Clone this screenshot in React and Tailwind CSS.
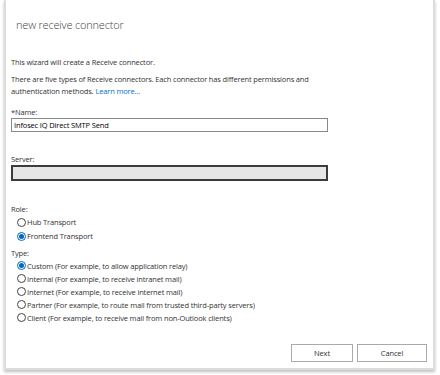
import React, { useState } from 'react';

const Radio = ({ checked, label, onClick, h }) => (
  <div onClick={onClick} className={`flex items-center cursor-default ${h}`}>
    <span
      className={`w-[9px] h-[9px] rounded-full border flex items-center justify-center bg-white ${
        checked ? 'border-[#0067c0]' : 'border-[#444]'
      }`}
    >
      {checked && <span className="w-[5px] h-[5px] rounded-full bg-[#0067c0]" />}
    </span>
    <span className="ml-[1px]">{label}</span>
  </div>
);

const App = () => {
  const [role, setRole] = useState('frontend');
  const [type, setType] = useState('custom');

  const types = [
    ['custom', 'Custom (For example, to allow application relay)'],
    ['internal', 'Internal (For example, to receive intranet mail)'],
    ['internet', 'Internet (For example, to receive internet mail)'],
    ['partner', 'Partner (For example, to route mail from trusted third-party servers)'],
    ['client', 'Client (For example, to receive mail from non-Outlook clients)'],
  ];

  return (
    <div className="w-[440px] h-[375px] bg-white" style={{ fontFamily: '"Open Sans", "Noto Sans", sans-serif' }}>
      {/* Dialog */}
      <div className="ml-[4px] w-[431px] h-[370px] border-l-2 border-r-2 border-b-2 border-[#dcdcdc] shadow-[0_2px_3px_rgba(0,0,0,0.25)] flex flex-col text-[7.5px] tracking-[-0.15px] text-[#333] leading-[12px]">
        <h1 className="pt-[18px] pl-[10px] text-[11px] font-light tracking-[-0.2px] text-[#444] leading-[14px]">
          new receive connector
        </h1>

        <div className="pl-[5px] pt-[24px] flex-1 flex flex-col">
          <p>This wizard will create a Receive connector.</p>
          <p className="mt-[5px] w-[315px]">
            There are five types of Receive connectors. Each connector has different permissions and authentication
            methods.<span className="ml-[2px] text-[#0072c6]">Learn more...</span>
          </p>

          <label className="mt-[9px]">*Name:</label>
          <input
            defaultValue="Infosec IQ Direct SMTP Send"
            className="w-[317px] h-[14px] border border-[#8a8a8a] px-[2px] text-[7.5px] text-black outline-none"
          />

          <label className="mt-[21px]">Server:</label>
          <div className="w-[317px] h-[16px] border-2 border-[#3c3c3c] bg-[#e6e6e6]" />

          <label className="mt-[22px]">Role:</label>
          <div className="pl-[6px] flex flex-col">
            <Radio h="h-[14px]" checked={role === 'hub'} label="Hub Transport" onClick={() => setRole('hub')} />
            <Radio h="h-[14px]" checked={role === 'frontend'} label="Frontend Transport" onClick={() => setRole('frontend')} />
          </div>

          <label className="mt-[4px]">Type:</label>
          <div className="pl-[6px] flex flex-col">
            {types.map(([k, l]) => (
              <Radio h="h-[13px]" key={k} checked={type === k} label={l} onClick={() => setType(k)} />
            ))}
          </div>

          <div className="mt-auto mb-[6px] flex justify-end gap-[4px] pr-[6px]">
            <button className="w-[62px] h-[18px] border border-[#aaa] bg-white text-[7.5px] text-[#333]">Next</button>
            <button className="w-[70px] h-[18px] border border-[#aaa] bg-white text-[7.5px] text-[#333]">Cancel</button>
          </div>
        </div>
      </div>
    </div>
  );
};

export default App;
